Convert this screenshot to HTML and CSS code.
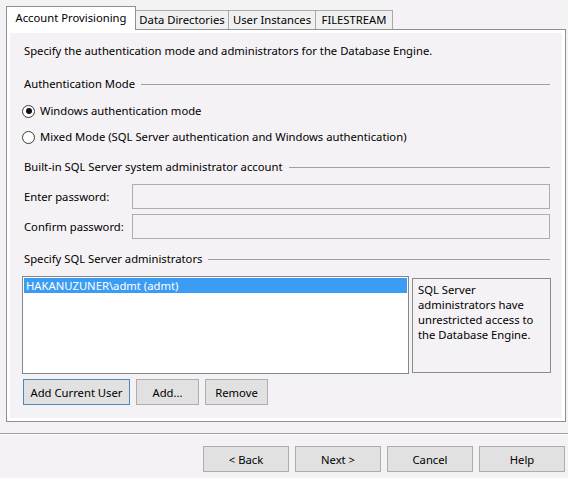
FILE: index.html
```html
<!DOCTYPE html>
<html>
<head>
<meta charset="utf-8">
<link rel="stylesheet" href="styles.css">
</head>
<body>
<div class="wizard">
  <div class="tabs">
    <div class="tab active">Account Provisioning</div>
    <div class="tab t2">Data Directories</div>
    <div class="tab t3">User Instances</div>
    <div class="tab t4">FILESTREAM</div>
  </div>
  <div class="page">
    <div class="page-inner">
      <div class="intro">Specify the authentication mode and administrators for the Database Engine.</div>

      <div class="group g1"><span>Authentication Mode</span><i class="rule"></i></div>
      <label class="radio r1"><span class="dot checked"></span>Windows authentication mode</label>
      <label class="radio r2"><span class="dot"></span>Mixed Mode (SQL Server authentication and Windows authentication)</label>

      <div class="group g2"><span>Built-in SQL Server system administrator account</span><i class="rule"></i></div>
      <div class="field f1"><span class="flabel">Enter password:</span><div class="input"></div></div>
      <div class="field f2"><span class="flabel">Confirm password:</span><div class="input"></div></div>

      <div class="group g3"><span>Specify SQL Server administrators</span><i class="rule"></i></div>
      <div class="admins">
        <div class="listbox"><div class="item sel">HAKANUZUNER\admt (admt)</div></div>
        <div class="info">SQL Server administrators have unrestricted access to the Database Engine.</div>
      </div>
      <div class="actions">
        <button class="btn focus w-current">Add Current User</button>
        <button class="btn w-add">Add...</button>
        <button class="btn w-remove">Remove</button>
      </div>
    </div>
  </div>
  <div class="sep"></div>
  <div class="footer">
    <button class="btn nav">&lt; Back</button>
    <button class="btn nav">Next &gt;</button>
    <button class="btn nav">Cancel</button>
    <button class="btn nav">Help</button>
  </div>
</div>
</body>
</html>
```
FILE: styles.css
```css
* { box-sizing: border-box; }
html, body { margin: 0; padding: 0; }
body {
  background: #f5f2f5;
  font-family: "Noto Sans", "Open Sans", sans-serif;
  font-size: 11.25px;
  color: #000;
  width: 568px;
  height: 478px;
  overflow: hidden;
}
.wizard { display: flex; flex-direction: column; }

.tabs {
  display: flex;
  align-items: flex-end;
  margin: 6px 0 0 6px;
  height: 23px;
  position: relative;
  z-index: 2;
}
.tab {
  height: 19px;
  border: 1px solid #a9a9a9;
  border-bottom: none;
  border-left: none;
  background: #f0f0f0;
  line-height: 18px;
  padding: 0;
  text-align: center;
  white-space: nowrap;
}
.tab.active {
  height: 24px;
  margin-bottom: -1px;
  border-left: 1px solid #8f8f8f;
  border-color: #8f8f8f;
  background: #fff;
  width: 130px;
  line-height: 22px;
}
.t2 { width: 93px; }
.t3 { width: 87px; }
.t4 { width: 77px; }

.page {
  margin-left: 6px;
  width: 560px;
  height: 393px;
  border: 1px solid #8f8f8f;
  background: #fff;
  padding: 3px;
}
.page-inner {
  background: #f5f2f5;
  height: 100%;
  padding: 10px 12px 0 14px;
  display: flex;
  flex-direction: column;
}
.intro { line-height: 16px; height: 16px; white-space: nowrap; }

.group {
  display: flex;
  align-items: center;
  height: 16px;
  line-height: 16px;
  white-space: nowrap;
}
.group .rule { flex: 1; border-top: 1px solid #a0a0a0; margin-left: 6px; height: 0; }
.g1 { margin-top: 17px; }
.g2 { margin-top: 14px; }
.g3 { margin-top: 12px; }

.radio {
  display: flex;
  align-items: center;
  height: 16px;
  line-height: 16px;
  margin-left: -2px;
  white-space: nowrap;
}
.r1 { margin-top: 11px; }
.r2 { margin-top: 10px; }
.dot {
  width: 13px;
  height: 13px;
  border: 1px solid #3c3c3c;
  border-radius: 50%;
  background: #fff;
  margin-right: 5px;
  display: flex;
  align-items: center;
  justify-content: center;
}
.dot.checked::after {
  content: "";
  width: 6px;
  height: 6px;
  border-radius: 50%;
  background: #111;
}

.field { display: flex; align-items: center; height: 25px; }
.f1 { margin-top: 9px; }
.f2 { margin-top: 5px; }
.flabel { width: 108px; white-space: nowrap; }
.input {
  flex: 1;
  height: 25px;
  border: 1px solid #adadad;
  background: #f5f2f5;
}

.admins {
  display: flex;
  margin: 9px -1px 0 -2px;
  height: 98px;
  gap: 3px;
}
.listbox {
  width: 387px;
  border: 1px solid #828790;
  background: #fff;
  padding: 1px;
}
.item { height: 15px; line-height: 15px; padding-left: 2px; white-space: nowrap; }
.item.sel { background: #3b9cf4; color: #fff; }
.info {
  flex: 1;
  margin: 2px 0 1px;
  border: 1px solid #8a8a8a;
  background: #f5f2f5;
  padding: 3px 5px;
  line-height: 15px;
}

.actions { display: flex; gap: 6px; margin: 5px 0 0 -1px; }
.btn {
  font: inherit;
  color: #000;
  height: 26px;
  border: 1px solid #adadad;
  background: #e1e1e1;
  padding: 0;
  margin: 0;
  text-align: center;
}
.btn.focus { border-color: #4f88b8; }
.w-current { width: 107px; }
.w-add { width: 63px; }
.w-remove { width: 63px; }

.sep {
  margin-top: 11px;
  height: 2px;
  border-top: 1px solid #a0a0a0;
  border-bottom: 1px solid #fff;
}
.footer {
  display: flex;
  justify-content: flex-end;
  gap: 6px;
  margin-top: 11px;
  padding-right: 3px;
}
.nav { width: 86px; }
```
